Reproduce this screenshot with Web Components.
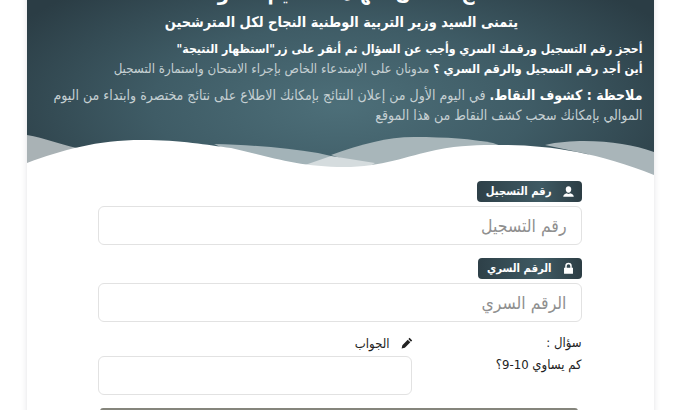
<!DOCTYPE html>
<html lang="ar" dir="rtl"><head><meta charset="utf-8">
<style>
html,body{margin:0;padding:0;height:410px;overflow:hidden;background:#fff}
body{font-family:"DejaVu Sans Condensed","DejaVu Sans",sans-serif;font-stretch:condensed}
result-card{margin:-10px auto 0}
</style></head><body>
<result-card>
  <result-header slot="header"></result-header>
  <form-field style="margin-bottom:13px" label="رقم التسجيل" icon="user" placeholder="رقم التسجيل"></form-field>
  <form-field label="الرقم السري" icon="lock" placeholder="الرقم السري"></form-field>
  <question-row></question-row>
  <submit-bar></submit-bar>
</result-card>
<script>
const ICONS={
 user:'<svg width="13" height="13" viewBox="0 0 16 16"><path fill="currentColor" d="M8 1.500c2 0 3.400 1.600 3.400 3.800S10 9.500 8 9.500 4.600 7.500 4.600 5.300 6 1.500 8 1.500zM1.500 14.500c0-2.400 2-3.600 4.500-4.300.6.500 1.300.8 2 .8s1.400-.3 2-.8c2.500.7 4.500 1.900 4.500 4.300z"/></svg>',
 lock:'<svg width="13" height="13" viewBox="0 0 16 16"><path fill="currentColor" d="M4 7V5a4 4 0 0 1 8 0v2h1.500v7.500h-11V7zm1.800 0h4.400V5a2.200 2.200 0 0 0-4.400 0z"/></svg>',
 pen:'<svg width="13" height="13" viewBox="0 0 16 16"><path fill="#222" d="M11.800 1l3.200 3.200-1.500 1.500-3.200-3.200zM9.500 3.300l3.200 3.200-6.700 6.700-4 1 .9-4.100z"/></svg>'
};
class ResultCard extends HTMLElement{constructor(){super();this.attachShadow({mode:'open'}).innerHTML=`<style>
:host{display:block;width:627px;background:#fff;box-shadow:0 0 6px rgba(90,100,105,.18);box-sizing:border-box}
.body{padding:5px 72px 0 71px;display:flex;flex-direction:column}
</style><slot name="header"></slot><div class="body"><slot></slot></div>`}}
class ResultHeader extends HTMLElement{constructor(){super();this.attachShadow({mode:'open'}).innerHTML=`<style>
:host{display:block;position:relative;height:186px;overflow:hidden;color:#fff;
 background:radial-gradient(ellipse 60% 85% at 50% 62%,#4d6f79 0%,#3f5c66 50%,#2b3d45 100%)}
.in{padding:0 11px 0 14px;position:relative;z-index:1}
h1{margin:0;height:20px;font-size:20px;line-height:6px;font-weight:700;text-align:center;white-space:nowrap;color:#fff}
h2{margin:0 0 6px;font-size:14.400px;line-height:24px;font-weight:700;text-align:center;color:#fff}
p{margin:0;font-size:13.200px;line-height:19px;color:#c5d0d3;white-space:nowrap}
b{color:#fff;font-weight:700}
.l1{font-size:12.200px}
.l2 b{font-size:12.400px}
.n{margin-top:6.500px;line-height:20px;font-size:14px}
svg{position:absolute;left:0;bottom:0;display:block}
</style><div class="in">
<h1>نتائج امتحان شهادة التعليم المتوسط</h1>
<h2>يتمنى السيد وزير التربية الوطنية النجاح لكل المترشحين</h2>
<p class="l1"><b>أحجز رقم التسجيل ورقمك السري وأجب عن السؤال ثم أنقر على زر"استظهار النتيجة"</b></p>
<p class="l2"><b>أين أجد رقم التسجيل والرقم السري ؟</b> مدونان على الإستدعاء الخاص بإجراء الامتحان واستمارة التسجيل</p>
<p class="n"><b>ملاحظة : كشوف النقاط.</b> في اليوم الأول من إعلان النتائج بإمكانك الاطلاع على نتائج مختصرة وابتداء من اليوم</p>
<p class="n" style="margin-top:0">الموالي بإمكانك سحب كشف النقاط من هذا الموقع</p>
</div>
<svg width="627" height="62" viewBox="0 0 627 62">
<path fill="#a9b2b5" d="M0 21C18 24 32 30 50 34L0 60Z"/>
<path fill="#a3b3b8" d="M187 30C225 31 260 34 291 39L304 42 290 60 230 50Z"/>
<path fill="#a8b6ba" d="M304 41C335 30 360 23 387 23 420 23 445 25 466 29L480 34 350 56Z"/>
<path fill="#a9b5b9" d="M518 31C530 28 545 27 557 27 585 27 607 31 627 38V70L560 40Z"/>
<path fill="#d5dcde" d="M278 51 304 42 348 49 330 60Z"/>
<path fill="#fff" d="M0 49C35 36 70 26 115 26 155 26 180 31 204 34 240 42 270 53 317 53 355 53 380 42 409 36 435 31 450 31 474 31 520 31 570 38 627 61V70H0Z"/>
</svg>`}}
class FormField extends HTMLElement{constructor(){super();const l=this.getAttribute('label'),i=this.getAttribute('icon'),p=this.getAttribute('placeholder');
this.attachShadow({mode:'open'}).innerHTML=`<style>
:host{display:block;margin-bottom:8px}
.tag{display:flex;align-items:center;gap:10px;width:max-content;height:21px;padding:0 7px 0 9px;border-radius:4px;color:#fff;font-size:11.200px;font-weight:700;
 background:linear-gradient(90deg,#2e4048,#3f5a63 60%,#2c3d44);margin-bottom:4px}
.tag svg{display:block}
.box{height:39px;box-sizing:border-box;border:1px solid #e2e2e2;border-radius:6px;display:flex;align-items:center;padding:0 14px;color:#8f8f8f;font-size:17.500px;background:#fff}
</style><div class="tag">${ICONS[i]}<span>${l}</span></div><div class="box">${p}</div>`}}
class QuestionRow extends HTMLElement{constructor(){super();this.attachShadow({mode:'open'}).innerHTML=`<style>
:host{display:flex;justify-content:space-between;color:#222;font-size:13px}
.q{line-height:22px;padding-top:2px}
.a{width:314px}
.lbl{display:flex;align-items:center;gap:10px;height:26px;margin-right:-1px}
.box{height:39px;box-sizing:border-box;border:1px solid #e2e2e2;border-radius:6px;background:#fff}
</style><div class="q"><div>سؤال :</div><div>كم يساوي 10-9؟</div></div>
<div class="a"><div class="lbl">${ICONS.pen}<span>الجواب</span></div><div class="box"></div></div>`}}
class SubmitBar extends HTMLElement{constructor(){super();this.attachShadow({mode:'open'}).innerHTML=`<style>
:host{display:block;height:30px;margin:13px 4px 0 2px;background:#85857c;border-radius:3px}</style>`}}
customElements.define('result-card',ResultCard);
customElements.define('result-header',ResultHeader);
customElements.define('form-field',FormField);
customElements.define('question-row',QuestionRow);
customElements.define('submit-bar',SubmitBar);
</script>
</body></html>
